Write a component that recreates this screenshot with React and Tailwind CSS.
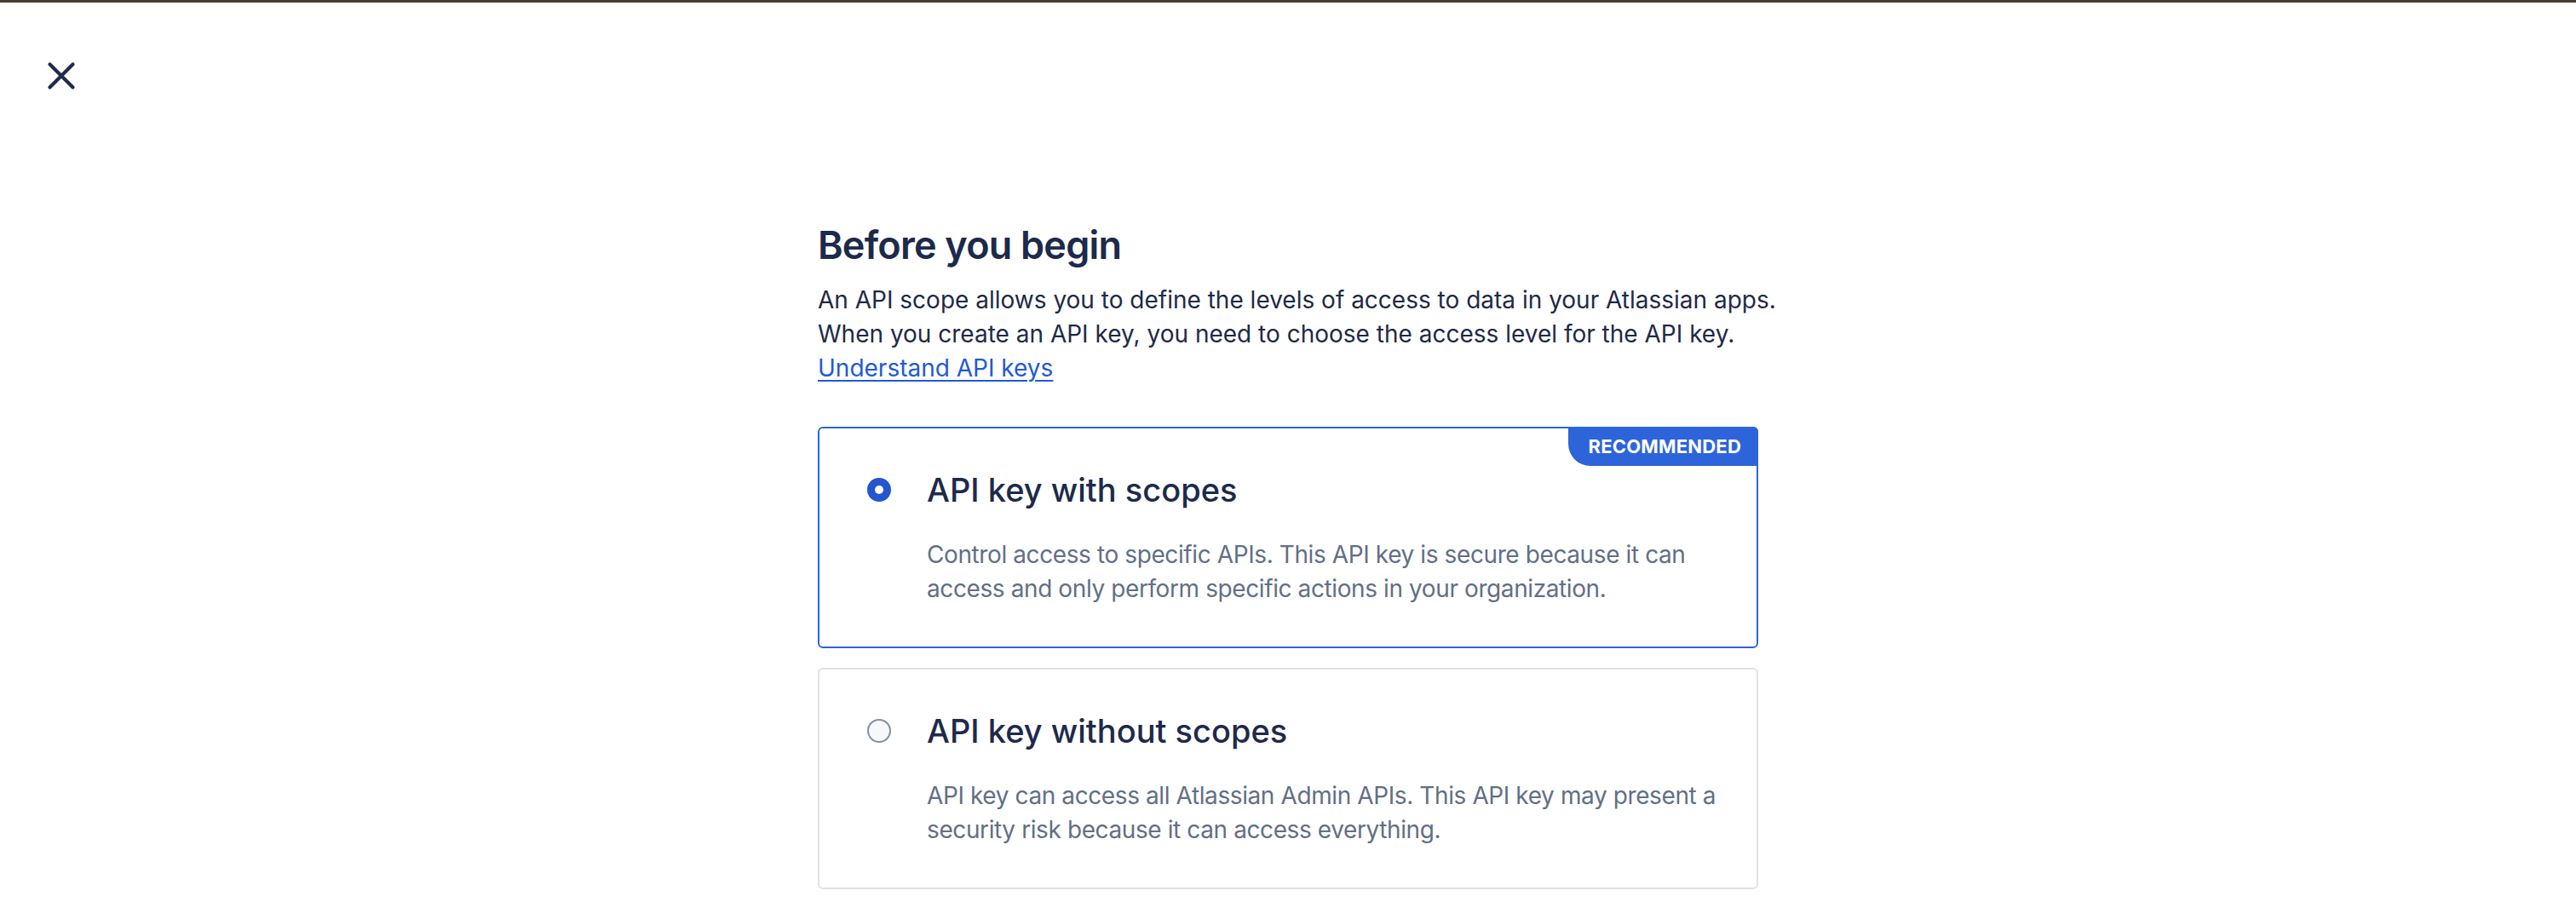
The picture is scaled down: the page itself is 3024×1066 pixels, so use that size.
import React from "react";

function Radio({ checked }) {
  if (checked) {
    return (
      <div className="w-[28px] h-[28px] rounded-full bg-[#2556cf] flex items-center justify-center">
        <div className="w-[10px] h-[10px] rounded-full bg-white" />
      </div>
    );
  }
  return <div className="w-[28px] h-[28px] rounded-full border-2 border-[#8590a2] bg-[#f7f8f9]" />;
}

function OptionCard({ checked, title, lines, badge }) {
  return (
    <div
      className={
        "relative rounded-[6px] border-2 pt-[50px] pb-[48px] pl-[46px] pr-[46px] " +
        (checked ? "border-[#2d64d9]" : "border-[#dfe1e6]")
      }
    >
      {badge && (
        <div className="absolute -top-[2px] -right-[2px] h-[46px] pl-[24px] pr-[20px] flex items-center bg-[#2d64d9] rounded-bl-[26px] rounded-tr-[6px]">
          <span className="text-[22px] font-bold text-white tracking-[0.2px] leading-none">
            {badge}
          </span>
        </div>
      )}
      <div className="flex">
        <div className="w-[48px] h-[44px] flex items-center justify-center shrink-0">
          <Radio checked={checked} />
        </div>
        <div className="ml-[32px] flex flex-col">
          <div className="h-[44px] text-[38px] leading-[44px] font-medium text-[#1d2a4b] whitespace-nowrap">
            {title}
          </div>
          <div className="mt-[34px] text-[28px] leading-[40px] tracking-[-0.4px] text-[#626f86] whitespace-nowrap">
            {lines[0]}
            <br />
            {lines[1]}
          </div>
        </div>
      </div>
    </div>
  );
}

export default function App() {
  return (
    <div
      className="w-[3024px] h-[1066px] bg-white overflow-hidden"
      style={{ fontFamily: "Inter, 'Liberation Sans', sans-serif" }}
    >
      <div className="h-[3px] bg-[#4a3c2d]" />
      <div className="pl-[48px] pt-[62px]">
        <button className="w-[48px] h-[48px] flex items-center justify-center">
          <svg width="48" height="48" viewBox="0 0 48 48" fill="none">
            <path
              d="M10.5 10.5L37.5 37.5M37.5 10.5L10.5 37.5"
              stroke="#1e2b4a"
              strokeWidth="4.2"
              strokeLinecap="round"
            />
          </svg>
        </button>
      </div>
      <div className="w-[1104px] mx-auto mt-[147px]">
        <h1 className="text-[45px] leading-[56px] font-semibold text-[#1c2a4c] tracking-[-0.8px]">
          Before you begin
        </h1>
        <p className="mt-[16px] text-[28px] leading-[40px] text-[#1e2a47] whitespace-nowrap">
          An API scope allows you to define the levels of access to data in your Atlassian apps.
          <br />
          When you create an API key, you need to choose the access level for the API key.
          <br />
          <a href="#" className="text-[#1f5ad6] underline underline-offset-[4px] decoration-[2px]">
            Understand API keys
          </a>
        </p>
        <div className="mt-[49px] flex flex-col gap-[23px]">
          <OptionCard
            checked
            badge="RECOMMENDED"
            title="API key with scopes"
            lines={[
              "Control access to specific APIs. This API key is secure because it can",
              "access and only perform specific actions in your organization.",
            ]}
          />
          <OptionCard
            title="API key without scopes"
            lines={[
              "API key can access all Atlassian Admin APIs. This API key may present a",
              "security risk because it can access everything.",
            ]}
          />
        </div>
      </div>
    </div>
  );
}
